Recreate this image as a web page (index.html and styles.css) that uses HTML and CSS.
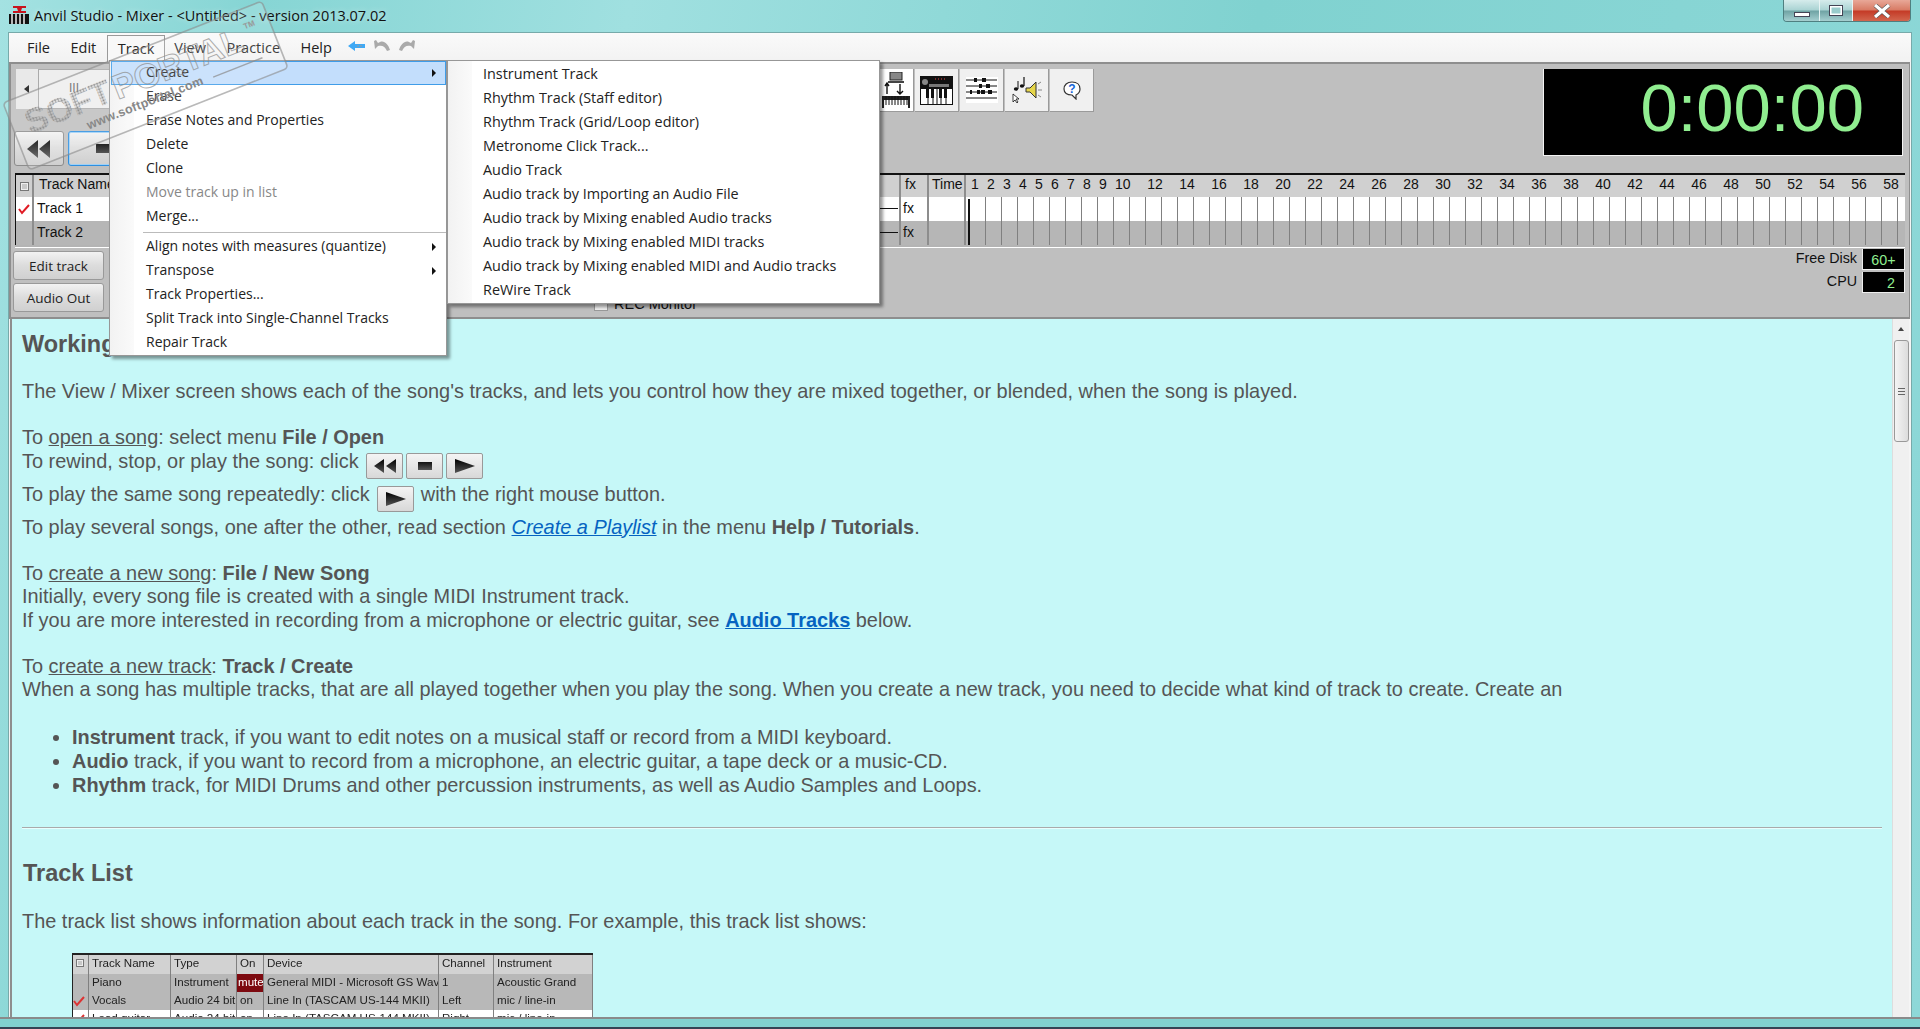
FILE: index.html
```html
<!DOCTYPE html>
<html lang="en">
<head>
<meta charset="utf-8">
<title>Anvil Studio - Mixer</title>
<link rel="stylesheet" href="styles.css">
</head>
<body>
<div class="page">
  <header class="titlebar">
    <svg class="appicon" viewBox="0 0 20 20" width="20" height="20">
      <path d="M4 1h13v2h-4l-1 3h5v2H4V6h5L8 3H4z" fill="#c8141e"/>
      <rect x="0" y="9" width="20" height="10" fill="#111"/>
      <path d="M3 9v6M7 9v6M11 9v6M15 9v6M3 15v4M7 15v4M11 15v4M15 15v4" stroke="#fff" stroke-width="1.4"/>
    </svg>
    <span class="title-text">Anvil Studio - Mixer - &lt;Untitled&gt; - version 2013.07.02</span>
    <div class="winbtns">
      <span class="winbtn min"><i></i></span>
      <span class="winbtn max"><i></i></span>
      <span class="winbtn close">
        <svg viewBox="0 0 18 14" width="18" height="14"><path d="M2 1l14 12M16 1L2 13" stroke="#555" stroke-width="4.4"/><path d="M2 1l14 12M16 1L2 13" stroke="#fff" stroke-width="3.2"/></svg>
      </span>
    </div>
  </header>

  <div class="client">
    <nav class="menubar">
      <span class="mi">File</span>
      <span class="mi">Edit</span>
      <span class="mi active">Track</span>
      <span class="mi">View</span>
      <span class="mi">Practice</span>
      <span class="mi">Help</span>
      <svg class="hist first" viewBox="0 0 18 12" width="18" height="12"><path d="M0 6l7-5v3h10v4H7v3z" fill="#3fa9f5"/><path d="M9 6h6" stroke="#9a9a9a" stroke-dasharray="2 1"/></svg>
      <svg class="hist" viewBox="0 0 18 12" width="18" height="12"><path d="M1 1l1 8 3-3c4-1 7 0 9 5l3-1C15 3 10-1 5 3L3 0z" fill="#aaa"/></svg>
      <svg class="hist" viewBox="0 0 18 12" width="18" height="12"><path d="M17 1l-1 8-3-3c-4-1-7 0-9 5l-3-1C3 3 8-1 13 3l2-3z" fill="#aaa"/></svg>
    </nav>

    <section class="panel">
      <div class="panel-top">
        <div class="panel-left">
          <div class="slider"><span class="slider-arrow"></span><div class="slider-box">III</div></div>
          <div class="transport">
            <button class="tbtn" type="button"><svg viewBox="0 0 26 18" width="26" height="18"><path d="M12 0v18L1 9zM24 0v18L13 9z" fill="url(#blk)"/></svg></button>
            <button class="tbtn focus" type="button"><span class="stopicon"></span></button>
          </div>
        </div>
        <div class="tools">
          <button class="tool first" type="button">
            <svg viewBox="0 0 28 36" width="28" height="36"><rect x="8" y="0" width="12" height="8" fill="#888" stroke="#222"/><rect x="6" y="9" width="16" height="2" fill="#444"/><path d="M5 12v10M3 14l2-3 2 3M18 12v10M15 19l3 3 3-3" stroke="#111" fill="none" stroke-width="1.4"/><rect x="0" y="24" width="28" height="12" fill="#222"/><path d="M2 28h24v8H2z" fill="#fff"/><path d="M4 24v9M7 24v9M10 24v9M13 24v9M16 24v9M19 24v9M22 24v9M25 24v9" stroke="#111"/></svg>
          </button>
          <button class="tool" type="button">
            <svg viewBox="0 0 33 29" width="33" height="29"><rect width="33" height="29" fill="#111"/><rect x="1" y="13" width="31" height="15" fill="#fff"/><circle cx="5" cy="6" r="3" fill="#888"/><rect x="9" y="8" width="20" height="3" fill="#777"/><path d="M15 3h1M18 3h1M21 3h1M24 3h1" stroke="#d44"/><path d="M6 13h3v9H6zM11 13h3v9h-3zM19 13h3v9h-3zM24 13h3v9h-3z" fill="#111"/><path d="M8 22v6M13 22v6M17 13v15M21 22v6M26 22v6" stroke="#111"/></svg>
          </button>
          <button class="tool" type="button">
            <svg viewBox="0 0 32 26" width="32" height="26"><rect width="32" height="26" fill="#fff"/><path d="M0 3h31M0 9h31M0 15h31M0 21h31" stroke="#111"/><path d="M8 1h3v4H8zM16 1h4v4h-4zM13 7h3v4h-3zM20 7h4v4h-4zM11 13h3v4h-3zM15 13h4v4h-4zM22 13h4v4h-4zM4 13h2v4H4z" fill="#111"/></svg>
          </button>
          <button class="tool" type="button">
            <svg viewBox="0 0 30 28" width="30" height="28"><ellipse cx="4" cy="13" rx="2.2" ry="1.8" fill="#111"/><path d="M6 13V5" stroke="#111"/><ellipse cx="10" cy="10" rx="2.2" ry="1.8" fill="#111"/><path d="M12 10V1" stroke="#111" stroke-width="1.2"/><path d="M14 12h4l6-6v16l-6-6h-4z" fill="#e6d64a" stroke="#333"/><path d="M26 8l3-2M26 14h4M26 19l3 2" stroke="#888"/><path d="M1 18v8l2-2 2 3 1-1-2-3h3z" fill="#fff" stroke="#111" stroke-width=".8"/></svg>
          </button>
          <button class="tool" type="button">
            <svg viewBox="0 0 20 20" width="20" height="20"><path d="M10 2c5 0 8 3 8 7 0 3-2 5-4 6v4l-4-4C5 15 2 13 2 9c0-4 3-7 8-7z" fill="#fff" stroke="#333" stroke-width="1.2"/><text x="10" y="13" class="qmark" text-anchor="middle">?</text></svg>
          </button>
        </div>
        <div class="timer">0:00:00</div>
      </div>

      <div class="tracks">
        <div class="trow thead">
          <div class="c cchk"><span class="chkbox"></span></div>
          <div class="c cname">Track Name</div>
          <div class="c cfx center">fx</div>
          <div class="c ctime">Time</div>
          <div class="bars">
            <span class="b">1</span><span class="b">2</span><span class="b">3</span><span class="b">4</span><span class="b">5</span><span class="b">6</span><span class="b">7</span><span class="b">8</span><span class="b">9</span><span class="b ten">10</span>
            <span class="b w">12</span><span class="b w">14</span><span class="b w">16</span><span class="b w">18</span><span class="b w">20</span><span class="b w">22</span><span class="b w">24</span><span class="b w">26</span><span class="b w">28</span><span class="b w">30</span><span class="b w">32</span><span class="b w">34</span><span class="b w">36</span><span class="b w">38</span><span class="b w">40</span><span class="b w">42</span><span class="b w">44</span><span class="b w">46</span><span class="b w">48</span><span class="b w">50</span><span class="b w">52</span><span class="b w">54</span><span class="b w">56</span><span class="b w">58</span>
          </div>
        </div>
        <div class="trow r1">
          <div class="c cchk"><svg viewBox="0 0 12 12" width="12" height="12"><path d="M1 6l3 4 7-8" stroke="#e01b24" stroke-width="2" fill="none"/></svg></div>
          <div class="c cname">Track 1<i class="pan"></i></div>
          <div class="c cfx">fx</div>
          <div class="c ctime"></div>
          <div class="grid"><i class="cursor"></i></div>
        </div>
        <div class="trow r2">
          <div class="c cchk"></div>
          <div class="c cname">Track 2<i class="pan"></i></div>
          <div class="c cfx">fx</div>
          <div class="c ctime"></div>
          <div class="grid"><i class="cursor"></i></div>
        </div>
      </div>

      <div class="panel-foot">
        <div class="foot-btns">
          <button class="fbtn" type="button">Edit track</button>
          <button class="fbtn" type="button">Audio Out</button>
        </div>
        <label class="rec"><span class="recbox"></span>REC Monitor</label>
        <div class="meters">
          <div class="meter"><span>Free Disk</span><b>60+</b></div>
          <div class="meter"><span>CPU</span><b class="right">2</b></div>
        </div>
      </div>
    </section>

    <section class="contentwrap">
      <article class="content">
        <h2>Working</h2>
        <p class="lead">The View / Mixer screen shows each of the song's tracks, and lets you control how they are mixed together, or blended, when the song is played.</p>
        <p class="block">To <u>open a song</u>: select menu <b>File / Open</b><br>
        To rewind, stop, or play the song: click <span class="imgbtns"><span class="ib"><svg viewBox="0 0 26 14" width="26" height="14"><path d="M12 0v14L2 7zM24 0v14L14 7z" fill="url(#blk)"/></svg></span><span class="ib"><i class="ibstop"></i></span><span class="ib"><svg viewBox="0 0 26 14" width="26" height="14"><path d="M3 0v14l20-7z" fill="url(#blk)"/></svg></span></span><br>
        To play the same song repeatedly: click <span class="imgbtns"><span class="ib"><svg viewBox="0 0 26 14" width="26" height="14"><path d="M3 0v14l20-7z" fill="url(#blk)"/></svg></span></span> with the right mouse button.<br>
        To play several songs, one after the other, read section <a class="lnk" href="#"><i>Create a Playlist</i></a> in the menu <b>Help / Tutorials</b>.</p>
        <p class="block">To <u>create a new song</u>: <b>File / New Song</b><br>
        Initially, every song file is created with a single MIDI Instrument track.<br>
        If you are more interested in recording from a microphone or electric guitar, see <a class="lnk" href="#"><b>Audio Tracks</b></a> below.</p>
        <p class="block">To <u>create a new track</u>: <b>Track / Create</b><br>
        When a song has multiple tracks, that are all played together when you play the song. When you create a new track, you need to decide what kind of track to create. Create an</p>
        <ul>
          <li><b>Instrument</b> track, if you want to edit notes on a musical staff or record from a MIDI keyboard.</li>
          <li><b>Audio</b> track, if you want to record from a microphone, an electric guitar, a tape deck or a music-CD.</li>
          <li><b>Rhythm</b> track, for MIDI Drums and other percussion instruments, as well as Audio Samples and Loops.</li>
        </ul>
        <hr>
        <h2 class="h2b">Track List</h2>
        <p class="lead2">The track list shows information about each track in the song. For example, this track list shows:</p>
        <div class="sample">
          <div class="srow shead"><span class="s s0"><i class="chkbox"></i></span><span class="s s1">Track Name</span><span class="s s2">Type</span><span class="s s3">On</span><span class="s s4">Device</span><span class="s s5">Channel</span><span class="s s6">Instrument</span></div>
          <div class="srow"><span class="s s0"></span><span class="s s1">Piano</span><span class="s s2">Instrument</span><span class="s s3 mute">mute</span><span class="s s4">General MIDI - Microsoft GS Wave</span><span class="s s5">1</span><span class="s s6">Acoustic Grand</span></div>
          <div class="srow"><span class="s s0"><svg viewBox="0 0 12 12" width="12" height="12"><path d="M1 6l3 4 7-8" stroke="#d33" stroke-width="2" fill="none"/></svg></span><span class="s s1">Vocals</span><span class="s s2">Audio 24 bit</span><span class="s s3">on</span><span class="s s4">Line In (TASCAM US-144 MKII)</span><span class="s s5">Left</span><span class="s s6">mic / line-in</span></div>
          <div class="srow white"><span class="s s0"><svg viewBox="0 0 12 12" width="12" height="12"><path d="M1 6l3 4 7-8" stroke="#d33" stroke-width="2" fill="none"/></svg></span><span class="s s1">Lead guitar</span><span class="s s2">Audio 24 bit</span><span class="s s3">on</span><span class="s s4">Line In (TASCAM US-144 MKII)</span><span class="s s5">Right</span><span class="s s6">mic / line-in</span></div>
        </div>
      </article>
      <div class="scrollbar">
        <span class="sb-up"></span>
        <div class="thumb"><i></i></div>
      </div>
    </section>
  </div>
  <div class="bottomframe"></div>

  <div class="menu menu1">
    <div class="item hot">Create<i class="arrow"></i></div>
    <div class="item">Erase</div>
    <div class="item">Erase Notes and Properties</div>
    <div class="item">Delete</div>
    <div class="item">Clone</div>
    <div class="item dis">Move track up in list</div>
    <div class="item">Merge...</div>
    <div class="sep"></div>
    <div class="item">Align notes with measures (quantize)<i class="arrow"></i></div>
    <div class="item">Transpose<i class="arrow"></i></div>
    <div class="item">Track Properties...</div>
    <div class="item">Split Track into Single-Channel Tracks</div>
    <div class="item">Repair Track</div>
  </div>
  <div class="menu menu2">
    <div class="item">Instrument Track</div>
    <div class="item">Rhythm Track (Staff editor)</div>
    <div class="item">Rhythm Track (Grid/Loop editor)</div>
    <div class="item">Metronome Click Track...</div>
    <div class="item">Audio Track</div>
    <div class="item">Audio track by Importing an Audio File</div>
    <div class="item">Audio track by Mixing enabled Audio tracks</div>
    <div class="item">Audio track by Mixing enabled MIDI tracks</div>
    <div class="item">Audio track by Mixing enabled MIDI and Audio tracks</div>
    <div class="item">ReWire Track</div>
  </div>

  <svg class="watermark" viewBox="0 0 300 180" width="300" height="180">
    <defs>
      <pattern id="dots" width="3" height="3" patternUnits="userSpaceOnUse"><circle cx="1.5" cy="1.5" r="1.15" fill="#8a8a8a"/></pattern>
      <linearGradient id="blk" x1="0" y1="0" x2="0" y2="1"><stop offset="0" stop-color="#000"/><stop offset="1" stop-color="#555"/></linearGradient>
    </defs>
    <g transform="translate(3 103) rotate(-21.5)">
      <rect x="0" y="0" width="278" height="72" rx="4" fill="#fff" fill-opacity=".14" stroke="#8a8a8a" stroke-opacity=".6" stroke-width="1.6"/>
      <text x="14" y="39" class="wm-soft" fill="url(#dots)">SOFT</text>
      <text x="108" y="39" class="wm-portal">PORTAL</text>
      <text x="252" y="20" class="wm-tm">TM</text>
      <text x="70" y="56" class="wm-url">www.softportal.com</text>
      <path d="M205 53h53" stroke="#8a8a8a" stroke-opacity=".7" stroke-width="1.4"/>
    </g>
  </svg>
</div>
</body>
</html>
```

FILE: styles.css
```css
* { box-sizing: border-box; }
html, body { margin: 0; height: 100%; overflow: hidden; }
body { font-family: "Liberation Sans", Arial, sans-serif; color: #111; background: #85d6d4; }
.page { position: relative; width: 1920px; height: 1029px; display: flex; flex-direction: column; overflow: hidden; background: linear-gradient(100deg, #a4e2e2 0, #86d5d4 12%, #a0e0e0 30%, #80d2d0 60%, #8ed8d8 100%); }

/* Title bar */
.titlebar { height: 32px; flex: none; display: flex; align-items: flex-start; padding-left: 9px; }
.appicon { margin-top: 5px; }
.title-text { margin: 5px 0 0 5px; font: 14.5px/22px "Open Sans", sans-serif; color: #111; white-space: nowrap; text-shadow: 0 0 6px rgba(255,255,255,.6); }
.winbtns { margin-left: auto; margin-right: 9px; display: flex; height: 22px; border: 1px solid #4f7f80; border-top: 0; border-radius: 0 0 4px 4px; overflow: hidden; }
.winbtn { display: flex; align-items: center; justify-content: center; border-left: 1px solid #e8f4f4; width: 33px; background: linear-gradient(#d6ecec 0, #a9d3d3 48%, #6fa3a4 52%, #a5cfd0 100%); }
.winbtn:first-child { border-left: 0; width: 35px; }
.winbtn.close { width: 58px; background: linear-gradient(#e8a898 0, #d87a64 48%, #c43a26 52%, #d2664e 100%); }
.winbtn.min i { width: 16px; height: 5px; margin-top: 8px; border: 1px solid #445; background: #fff; }
.winbtn.max i { width: 14px; height: 11px; border: 1px solid #445; background: #9cc; box-shadow: inset 0 0 0 1.5px #fff; }

/* Client */
.client { flex: 1; min-height: 0; display: flex; flex-direction: column; margin: 0 8px; border: 1px solid #7aa; border-bottom: 0; background: #f5f5f5; }
.menubar { height: 29px; flex: none; display: flex; align-items: flex-start; padding-left: 9px; background: linear-gradient(#fafafa, #f2f2f2); font: 14.5px/30px "Open Sans", sans-serif; color: #222; }
.mi { padding: 0 9px; height: 29px; margin-right: 2.5px; }
.mi.active { margin: 2px 0 0 -1px; height: 27px; line-height: 25px; padding: 0 10px; border: 1px solid #999; border-bottom: 0; background: #f8f8f8; }
.hist { margin: 7px 7px 0 0; }
.hist.first { margin-left: 5px; }

/* Panel */
.panel { height: 257px; flex: none; background: #bfbfbf; border: 2px solid #8e8e8e; border-width: 2px 1px 2px 2px; margin-right: 1px; display: flex; flex-direction: column; padding: 5px 4px 0 5px; }
.panel-top { display: flex; height: 104px; flex: none; }
.panel-left { width: 862px; flex: none; display: flex; flex-direction: column; }
.slider { height: 40px; width: 320px; background: #e9e9e9; display: flex; align-items: center; position: relative; }
.slider-arrow { width: 0; height: 0; margin-left: 8px; border: 4px solid transparent; border-left: 0; border-right: 5px solid #333; }
.slider-box { margin-left: 9px; width: 200px; height: 40px; border: 1px solid #aaa; background: #eee; padding-left: 30px; font-size: 12px; line-height: 36px; color: #666; }
.transport { display: flex; gap: 4px; margin-top: 22px; margin-left: -2px; }
.tbtn { width: 50px; height: 35px; padding: 0; display: flex; align-items: center; justify-content: center; border: 1px solid #8c8c8c; border-radius: 3px; background: linear-gradient(#f2f2f2, #dcdcdc 50%, #cfcfcf); }
.tbtn.focus { border: 1px solid #2d8fe0; box-shadow: inset 0 0 0 1px #9fd0f5; width: 70px; }
.stopicon { width: 14px; height: 9px; background: linear-gradient(#222, #555); }
.tools { display: flex; gap: 1px; height: 43px; }
.tool { width: 44px; height: 43px; padding: 0; display: flex; align-items: center; justify-content: center; background: #f0f0f0; border: 1px solid #9a9a9a; border-width: 0 1px 1px 0; }
.tool.first { width: 36px; background: #fff; }
.qmark { font: bold 12px "Liberation Sans", sans-serif; fill: #1565d8; }
.timer { margin-left: auto; margin-right: 2px; width: 360px; height: 87px; background: #000; border: 1px solid #f4f4f4; border-width: 0 1px 1px 1px; color: #90ee90; font-size: 67px; line-height: 78px; text-align: right; padding-right: 38px; }

/* Tracks */
.tracks { margin-left: -1px; border-top: 2px solid #111; border-bottom: 1px solid #fff; flex: none; padding-bottom: 2px; background: #b4b4b4; }
.trow { display: flex; height: 24px; font-size: 14px; line-height: 23px; }
.thead { height: 22px; line-height: 19px; background: #d0d0d0; }
.r1 { background: #fff; }
.r2 { background: #b6b6b6; }
.c { flex: none; height: 100%; border-right: 2px solid #8d8d8d; white-space: nowrap; overflow: hidden; }
.cchk { width: 19px; border-left: 1px solid #111; display: flex; align-items: center; justify-content: center; }
.cname { width: 867px; padding-left: 3px; position: relative; }
.thead .cname { padding-left: 5px; }
.pan { position: absolute; right: 1px; top: 11px; width: 40px; height: 1px; background: #111; }
.cfx { width: 28px; padding-left: 2px; }
.center { padding-left: 4px; }
.ctime { width: 37px; padding-left: 3px; overflow: visible; }
.bars { flex: 1; display: flex; padding-left: 1px; overflow: hidden; }
.b { width: 16px; flex: none; text-align: center; }
.b.ten { width: 28px; padding-left: 4px; text-align: left; }
.b.w { width: 32px; flex: none; }
.grid { flex: 1; position: relative; background-image: repeating-linear-gradient(90deg, transparent 0, transparent 15px, #808080 15px, #808080 16px); background-position: 4px 0; }
.cursor { position: absolute; left: 2px; top: 0; bottom: 0; width: 2px; background: #111; }
.r1 .cursor { top: 2px; }
.chkbox { display: inline-block; width: 9px; height: 9px; border: 1px solid #777; background: #c8c8c8; box-shadow: inset 0 0 0 1px #eee; }

/* Foot */
.panel-foot { display: flex; flex: 1; min-height: 0; font-size: 14px; position: relative; }
.foot-btns { width: 91px; margin-left: -3px; margin-top: 3px; display: flex; flex-direction: column; gap: 3px; }
.fbtn { height: 29px; width: 91px; padding: 0; font: 13.5px "Open Sans", sans-serif; color: #222; border: 1px solid #999; border-radius: 3px; background: linear-gradient(#f2f2f2, #dcdcdc 50%, #d0d0d0); }
.rec { margin-left: 490px; margin-top: 48px; display: flex; align-items: center; height: 16px; gap: 6px; font-size: 14.5px; }
.recbox { width: 14px; height: 14px; background: #eee; border: 1px solid #999; }
.meters { margin-left: auto; margin-top: 1px; display: flex; flex-direction: column; gap: 2px; }
.meter { display: flex; justify-content: flex-end; gap: 5px; height: 21px; line-height: 19px; font-size: 14.3px; }
.meter b { font-weight: normal; width: 43px; background: #000; color: #90ee90; border: 1px solid #eee; border-width: 0 1px 1px 1px; line-height: 23px; text-align: center; }
.meter b.right { text-align: right; padding-right: 9px; }

/* Content */
.contentwrap { flex: 1; min-height: 0; display: flex; margin: 0 2px 0 1px; background: #c6f8f8; border-left: 2px solid #8e8e8e; }
.content { flex: 1; min-width: 0; overflow: hidden; padding: 0 0 0 10px; font-size: 19.93px; line-height: 23.5px; color: #555; }
.content h2 { margin: 12px 0 0; font-size: 23.5px; line-height: 26px; color: #555; font-weight: bold; white-space: nowrap; }
.content p { margin: 0; }
.lead { margin-top: 23px !important; }
.block { margin-top: 22.5px !important; }
.lnk { color: #0563c1; }
.imgbtns { display: inline-flex; gap: 3px; vertical-align: -5px; margin: 0 1px 4px 2px; }
.ib { width: 37px; height: 26px; display: inline-flex; align-items: center; justify-content: center; border: 1px solid #999; border-radius: 2px; background: linear-gradient(#f4f4f4, #d8d8d8); }
.ibstop { width: 14px; height: 8px; background: linear-gradient(#111, #555); }
.content ul { margin: 23.5px 0 0; padding: 0 0 0 50px; }
.content li { line-height: 24.2px; }
.content hr { margin: 29px 10px 0 0; border: 0; border-top: 1px solid #aaa; border-bottom: 1px solid #e8ffff; }
.h2b { margin-top: 31px !important; margin-left: 1px !important; }
.lead2 { margin-top: 24px !important; }
.sample { margin: 20px 0 0 50px; width: 521px; background: #b8b8b8; border-top: 2px solid #222; font: 11.6px/16.5px "Liberation Sans", sans-serif; color: #222; filter: blur(.25px); }
.srow { display: flex; height: 18.4px; }
.shead { background: #d2d2d2; }
.white { background: #fff; }
.s { flex: none; padding-left: 3px; border-right: 1px solid #808080; white-space: nowrap; overflow: hidden; }
.s0 { width: 17px; padding: 0; border-left: 1px solid #222; }
.s0 .chkbox { width: 8px; height: 8px; margin: 3px 0 0 3px; }
.s0 svg { display: block; margin-top: 3px; }
.s1 { width: 82px; }
.s2 { width: 66px; }
.s3 { width: 27px; }
.s4 { width: 175px; }
.s5 { width: 55px; }
.s6 { width: 99px; }
.mute { background: #7d0a10; color: #fff; padding-left: 1px; }

/* Scrollbar */
.scrollbar { width: 17px; flex: none; background: #f0f0f0; border-left: 1px solid #ddd; position: relative; display: flex; flex-direction: column; align-items: center; }
.sb-up { margin-top: 8px; width: 0; height: 0; border: 3px solid transparent; border-top: 0; border-bottom: 4px solid #444; }
.thumb { margin-top: 9px; width: 15px; height: 102px; border: 1px solid #999; border-radius: 3px; background: linear-gradient(90deg, #f4f4f4, #dcdcdc); display: flex; align-items: center; justify-content: center; }
.thumb i { width: 7px; height: 7px; border-top: 1px solid #666; border-bottom: 1px solid #666; background: linear-gradient(#666, #666) center/100% 1px no-repeat; }

.bottomframe { height: 12px; flex: none; border-top: 2px solid #8a8a8a; border-bottom: 2px solid #345; background: #80d2d0; }

/* Menus */
.menu { position: absolute; background: #fff; border: 1px solid #979797; box-shadow: 3px 3px 3px rgba(0,0,0,.4); font: 14px/22px "Open Sans", sans-serif; color: #222; white-space: nowrap; }
.menu1 { left: 109px; top: 60px; width: 338px; height: 296px; padding: 0 0 0 1px; background: linear-gradient(90deg, #f2f2f2 0, #fafafa 24px, #fff 24px); }
.menu2 { left: 447px; top: 60px; width: 433px; height: 244px; padding: 2px 0 0 35px; font-size: 14.4px; background: linear-gradient(90deg, #f2f2f2 0, #fafafa 24px, #fff 24px); }
.item { height: 24px; padding-left: 35px; position: relative; }
.menu2 .item { padding-left: 0; }
.item.hot { background: #c3defc; outline: 1px solid #3f9ce8; outline-offset: -1px; }
.item.dis { color: #888; }
.arrow { position: absolute; right: 10px; top: 8px; width: 0; height: 0; border: 4px solid transparent; border-right: 0; border-left: 4px solid #111; }
.sep { height: 2px; margin: 3px 0 1px 32px; border-top: 1px solid #bbb; }

/* Watermark */
.watermark { position: absolute; left: 0; top: 0; pointer-events: none; }
.wm-soft { font: bold 34px "Liberation Sans", sans-serif; }
.wm-portal { font: bold 34px "Liberation Sans", sans-serif; fill: none; stroke: #8a8a8a; stroke-opacity: .7; stroke-width: 1; }
.wm-tm { font: bold 8px "Liberation Sans", sans-serif; fill: #999; }
.wm-url { font: bold 12.5px "Liberation Sans", sans-serif; fill: #888; letter-spacing: .3px; }
```
